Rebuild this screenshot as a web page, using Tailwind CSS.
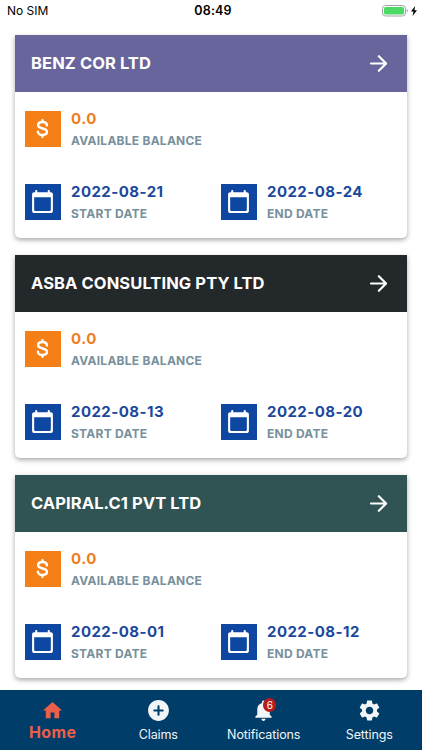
<!DOCTYPE html>
<html lang="en">
<head>
    <meta charset="UTF-8">
    <meta name="viewport" content="width=device-width, initial-scale=1.0">
    <title>Home</title>
    <script src="https://cdn.jsdelivr.net/npm/@tailwindcss/browser@4"></script>
</head>
<body class="bg-white font-['Inter',sans-serif]">
    <!-- Icons -->
    <svg class="hidden">
        <symbol id="arrow" viewBox="0 0 24 24"><path d="M4.8 12H19M12.3 5l7 7-7 7" fill="none" stroke="#fff" stroke-width="2.1" stroke-linecap="round" stroke-linejoin="round"/></symbol>
        <symbol id="dollar" viewBox="0 0 24 24"><path d="M16.2 9c0-1.8-1.7-3.2-4.2-3.2S7.8 7 7.8 8.9c0 1.9 1.8 2.5 4.2 3.1 2.5.6 4.3 1.4 4.3 3.2 0 1.7-1.7 3-4.3 3s-4.4-1.4-4.4-3.2M12 4v1.8M12 18.2V20" fill="none" stroke="#fff" stroke-width="2.3" stroke-linecap="round"/></symbol>
        <symbol id="calendar" viewBox="0 0 24 24"><path fill-rule="evenodd" d="M20 3h-1V2c0-.55-.45-1-1-1s-1 .45-1 1v1H7V2c0-.55-.45-1-1-1s-1 .45-1 1v1H4c-1.1 0-2 .9-2 2v16c0 1.1.9 2 2 2h16c1.1 0 2-.9 2-2V5c0-1.1-.9-2-2-2zm-1 18H5c-.55 0-1-.45-1-1V8h16v12c0 .55-.45 1-1 1z"/></symbol>
    </svg>

    <div class="h-[750px] flex flex-col overflow-hidden">
        <header class="h-[35px] shrink-0 grid grid-cols-3 items-start pt-[3px] pl-[7px] pr-[5px] text-[12.5px] leading-4 text-black">
            <span class="text-[12px]">No SIM</span>
            <span class="text-center font-semibold text-[12.5px] tracking-[0.15px] pl-[2px]">08:49</span>
            <div class="flex justify-end items-center h-4">
                <svg class="w-[26px] h-3" viewBox="0 0 26 12">
                    <rect x="0.5" y="0.5" width="23" height="10.5" rx="3" fill="none" stroke="#a3a3a3"/>
                    <rect x="2" y="2" width="20" height="7.5" rx="1.5" fill="#4cd964"/>
                    <path d="M24.7 4v3.6c.7-.3 1.1-1 1.1-1.8s-.4-1.5-1.1-1.8z" fill="#a3a3a3"/>
                </svg>
                <svg class="w-[6px] h-[10px] ml-[3px]" viewBox="0 0 6 10"><path d="M4.2 0L0 5.6h2.5L1.6 10 6 4.2H3.4z"/></svg>
            </div>
        </header>

        <main id="cards" class="flex-1 flex flex-col gap-[17px] pl-[14.5px] pr-[15px]"></main>

        <nav class="h-[60.5px] shrink-0 bg-[#003d68] grid grid-cols-4 text-[#f2f5f8] text-[12.5px] leading-4 tracking-[-0.1px]">
            <a class="flex flex-col items-center pt-[9px] text-[#ec5f48]">
                <svg class="w-[23px] h-[23px]" viewBox="0 0 24 24" fill="currentColor"><path d="M10 20v-6h4v6h5v-8h3L12 3 2 12h3v8z"/></svg>
                <span class="text-[16px] font-bold tracking-[0.4px] leading-5">Home</span>
            </a>
            <a class="flex flex-col items-center pt-2">
                <svg class="w-[25px] h-[25px]" viewBox="0 0 24 24" fill="currentColor"><path d="M12 2C6.48 2 2 6.48 2 12s4.48 10 10 10 10-4.48 10-10S17.52 2 12 2zm4 11h-3v3c0 .55-.45 1-1 1s-1-.45-1-1v-3H8c-.55 0-1-.45-1-1s.45-1 1-1h3V8c0-.55.45-1 1-1s1 .45 1 1v3h3c.55 0 1 .45 1 1s-.45 1-1 1z"/></svg>
                <span class="mt-[4px]">Claims</span>
            </a>
            <a class="flex flex-col items-center pt-2">
                <div class="relative">
                    <svg class="w-[25px] h-[25px]" viewBox="0 0 24 24" fill="currentColor"><path d="M12 22c1.1 0 2-.9 2-2h-4c0 1.1.89 2 2 2zm6-6v-5c0-3.07-1.64-5.64-4.5-6.32V4c0-.83-.67-1.5-1.5-1.5s-1.5.67-1.5 1.5v.68C7.63 5.36 6 7.92 6 11v5l-1.7 1.7c-.5.5-.2 1.3.5 1.3h14.4c.7 0 1-.8.5-1.3L18 16z"/></svg>
                    <span class="absolute left-[12px] top-0 w-[13px] h-[14px] rounded-full bg-[#b71c1c] text-[10px] leading-[14px] tracking-normal text-center text-white">6</span>
                </div>
                <span class="mt-[4px]">Notifications</span>
            </a>
            <a class="flex flex-col items-center pt-2">
                <svg class="w-[25px] h-[25px]" viewBox="0 0 24 24" fill="currentColor"><path d="M19.14 12.94c.04-.3.06-.61.06-.94 0-.32-.02-.64-.07-.94l2.03-1.58c.18-.14.23-.41.12-.61l-1.92-3.32c-.12-.22-.37-.29-.59-.22l-2.39.96c-.5-.38-1.03-.7-1.62-.94l-.36-2.54c-.04-.24-.24-.41-.48-.41h-3.84c-.24 0-.43.17-.47.41l-.36 2.54c-.59.24-1.13.57-1.62.94l-2.39-.96c-.22-.08-.47 0-.59.22L2.74 8.87c-.12.21-.08.47.12.61l2.03 1.58c-.05.3-.09.63-.09.94s.02.64.07.94l-2.03 1.58c-.18.14-.23.41-.12.61l1.92 3.32c.12.22.37.29.59.22l2.39-.96c.5.38 1.03.7 1.62.94l.36 2.54c.05.24.24.41.48.41h3.84c.24 0 .44-.17.47-.41l.36-2.54c.59-.24 1.13-.56 1.62-.94l2.39.96c.22.08.47 0 .59-.22l1.92-3.32c.12-.22.07-.47-.12-.61l-2.01-1.58zM12 15.6c-1.98 0-3.6-1.62-3.6-3.6s1.62-3.6 3.6-3.6 3.6 1.62 3.6 3.6-1.62 3.6-3.6 3.6z"/></svg>
                <span class="mt-[4px]">Settings</span>
            </a>
        </nav>
    </div>

    <script>
        const companies = [
            { name: 'BENZ COR LTD', color: 'bg-[#67659b]', balance: '0.0', start: '2022-08-21', end: '2022-08-24' },
            { name: 'ASBA CONSULTING PTY LTD', color: 'bg-[#23282b]', balance: '0.0', start: '2022-08-13', end: '2022-08-20' },
            { name: 'CAPIRAL.C1 PVT LTD', color: 'bg-[#2f5453]', balance: '0.0', start: '2022-08-01', end: '2022-08-12' }
        ];

        function item(icon, bg, color, value, label) {
            return `
                <div class="flex gap-[10.5px]">
                    <div class="w-[35.5px] h-[35.5px] flex items-center justify-center ${bg}">
                        <svg class="w-[25px] h-[25px] fill-white"><use href="#${icon}"/></svg>
                    </div>
                    <div>
                        <p class="text-[15px] leading-4 font-bold tracking-[0.45px] ${color}">${value}</p>
                        <p class="mt-[6px] text-[12px] leading-4 font-bold tracking-[0.25px] text-[#78909c]">${label}</p>
                    </div>
                </div>`;
        }

        document.getElementById('cards').innerHTML = companies.map(c => `
            <section class="h-[203px] shrink-0 bg-white rounded-b-[5px] shadow-[0px_2px_5px_rgba(0,0,0,0.35)]">
                <div class="h-[57px] flex items-center justify-between pl-[16.5px] pr-4 text-white ${c.color}">
                    <h2 class="text-[16.5px] font-bold tracking-[0.1px]">${c.name}</h2>
                    <svg class="w-[25px] h-[25px] fill-white"><use href="#arrow"/></svg>
                </div>
                <div class="grid grid-cols-2 gap-y-[35px] pl-[10.5px] pt-[19px]">
                    <div class="col-span-2">${item('dollar', 'bg-[#f57f17]', 'text-[#ef7d1e]', c.balance, 'AVAILABLE BALANCE')}</div>
                    ${item('calendar', 'bg-[#0d47a1]', 'text-[#1a489d]', c.start, 'START DATE')}
                    <div class="pl-[5px]">${item('calendar', 'bg-[#0d47a1]', 'text-[#1a489d]', c.end, 'END DATE')}</div>
                </div>
            </section>`).join('');
    </script>
</body>
</html>
